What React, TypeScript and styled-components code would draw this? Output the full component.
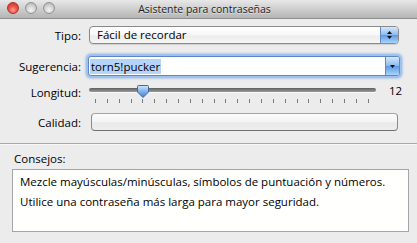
import React from "react";
import styled, { createGlobalStyle } from "styled-components";

const GlobalStyle = createGlobalStyle`
  html, body {
    margin: 0;
    padding: 0;
    background: #ececec;
  }
  body {
    font-family: "Open Sans", "DejaVu Sans", sans-serif;
    font-size: 11.5px;
    color: #000;
  }
`;

const Window = styled.div`
  width: 417px;
  height: 243px;
  display: flex;
  flex-direction: column;
  background: #ececec;
  overflow: hidden;
`;

const TitleBar = styled.div`
  flex: none;
  height: 18px;
  position: relative;
  display: flex;
  align-items: center;
  justify-content: center;
  padding-right: 8px;
  background: linear-gradient(#e8e8e8, #b4b4b4);
  border-bottom: 1px solid #8f8f8f;
`;

const Lights = styled.div`
  position: absolute;
  left: 7px;
  top: 2px;
  display: flex;
  gap: 6px;
`;

const Light = styled.span<{ $red?: boolean }>`
  width: 12px;
  height: 12px;
  box-sizing: border-box;
  border-radius: 50%;
  border: 1px solid ${(p) => (p.$red ? "#a7342c" : "#929292")};
  background: ${(p) =>
    p.$red
      ? "radial-gradient(circle at 50% 70%, #ff9d93 0%, #ee5247 45%, #c23128 100%)"
      : "radial-gradient(circle at 50% 70%, #f4f4f4 0%, #d2d2d2 50%, #a9a9a9 100%)"};
`;

const Title = styled.span`
  font-size: 10.5px;
  color: #1e1e1e;
  text-shadow: 0 1px 0 rgba(255, 255, 255, 0.5);
`;

const Form = styled.div`
  display: flex;
  flex-direction: column;
  padding: 0 17px 0 0;
`;

const Row = styled.div<{ $h: number; $mt: number }>`
  display: grid;
  grid-template-columns: 81px 1fr;
  column-gap: 8px;
  align-items: center;
  height: ${(p) => p.$h}px;
  margin-top: ${(p) => p.$mt}px;
`;

const Label = styled.span`
  text-align: right;
  white-space: nowrap;
`;

const Popup = styled.div`
  height: 18px;
  box-sizing: border-box;
  display: flex;
  margin-right: 1px;
  border: 1px solid #8a8a8a;
  border-radius: 4px;
  overflow: hidden;
  background: linear-gradient(#ffffff 0%, #f8f8f8 50%, #ececec 55%, #f6f6f6 100%);
  box-shadow: 0 1px 1px rgba(0, 0, 0, 0.12);
`;

const PopupText = styled.span`
  flex: 1;
  padding-left: 7px;
  line-height: 16px;
`;

const ArrowCell = styled.div<{ $w: number }>`
  width: ${(p) => p.$w}px;
  flex: none;
  display: flex;
  flex-direction: column;
  align-items: center;
  justify-content: center;
  gap: 2px;
  border-left: 1px solid #6489c0;
  background: linear-gradient(#d6e8fb 0%, #8dbbef 48%, #5e9ae2 52%, #a9d4fc 100%);
`;

const Combo = styled.div`
  height: 20px;
  box-sizing: border-box;
  display: flex;
  margin-left: -1px;
  border: 1px solid #5d87c4;
  border-radius: 3px;
  overflow: hidden;
  background: #fff;
  box-shadow: 0 0 0 2px #9ec2eb, 0 0 2px 3px rgba(120, 165, 225, 0.45);
`;

const ComboField = styled.div`
  flex: 1;
  display: flex;
  align-items: center;
  padding-left: 1px;
`;

const Selected = styled.span`
  background: #b5d4fb;
  line-height: 15px;
  padding: 0 1px;
`;

const SliderLine = styled.div`
  display: flex;
  align-items: flex-start;
  height: 100%;
`;

const SliderBox = styled.div`
  position: relative;
  width: 287px;
  display: flex;
  flex-direction: column;
`;

const Track = styled.div`
  height: 4px;
  margin-top: 3px;
  border-radius: 2px;
  background: linear-gradient(#5f5f5f, #9a9a9a);
  box-shadow: 0 1px 0 rgba(255, 255, 255, 0.7);
`;

const Ticks = styled.div`
  display: flex;
  justify-content: space-between;
  padding: 0 7px 0 6px;
  margin-top: 7px;
  height: 4px;
`;

const Tick = styled.span`
  width: 1px;
  background: #7a7a7a;
`;

const Knob = styled.svg`
  position: absolute;
  top: 0;
  margin-left: -6px;
`;

const Value = styled.span`
  margin-left: 13px;
  line-height: 11px;
`;

const Meter = styled.div`
  height: 18px;
  box-sizing: border-box;
  margin-left: 2px;
  margin-right: 2px;
  border: 1px solid #8b8b8b;
  border-top-color: #a5a5a5;
  border-bottom-color: #6f6f6f;
  border-radius: 4px;
  background: linear-gradient(#fbfbfb 0%, #f3f3f3 50%, #e9e9e9 55%, #eeeeee 100%);
`;

const Separator = styled.div`
  height: 1px;
  margin-top: 12px;
  background: #a9a9a9;
  box-shadow: 0 1px 0 #f7f7f7;
`;

const Tips = styled.div`
  display: flex;
  flex-direction: column;
  padding: 0 8px 0 12px;
`;

const TipsLabel = styled.span`
  margin-top: 8px;
  padding-left: 2px;
  line-height: 14px;
`;

const TipsBox = styled.div`
  margin-top: 3px;
  height: 63px;
  box-sizing: border-box;
  padding: 5px 7px;
  border: 1px solid #a6a6a6;
  background: #fffffd;
`;

const Tip = styled.p`
  margin: 0;
  line-height: 14px;
  white-space: nowrap;
  & + & {
    margin-top: 6px;
  }
`;

const Up = () => (
  <svg width="5" height="3" viewBox="0 0 5 3">
    <path d="M2.5 0L5 3H0z" fill="#111" />
  </svg>
);

const Down = () => (
  <svg width="5" height="3" viewBox="0 0 5 3">
    <path d="M0 0h5L2.5 3z" fill="#111" />
  </svg>
);

const TICKS = 24;
const length = 12;
const minLength = 8;

export default function App() {
  const step = (287 - 13) / (TICKS - 1);
  const knobLeft = 6 + (length - minLength) * step;

  return (
    <>
      <GlobalStyle />
      <Window>
        <TitleBar>
          <Lights>
            <Light $red />
            <Light />
            <Light />
          </Lights>
          <Title>Asistente para contraseñas</Title>
        </TitleBar>

        <Form>
          <Row $h={18} $mt={7}>
            <Label>Tipo:</Label>
            <Popup>
              <PopupText>Fácil de recordar</PopupText>
              <ArrowCell $w={17}>
                <Up />
                <Down />
              </ArrowCell>
            </Popup>
          </Row>

          <Row $h={20} $mt={12}>
            <Label>Sugerencia:</Label>
            <Combo>
              <ComboField>
                <Selected>torn5!pucker</Selected>
              </ComboField>
              <ArrowCell $w={13}>
                <Down />
              </ArrowCell>
            </Combo>
          </Row>

          <Row $h={19} $mt={9}>
            <Label style={{ alignSelf: "start", marginTop: 0 }}>Longitud:</Label>
            <SliderLine>
              <SliderBox>
                <Track />
                <Ticks>
                  {Array.from({ length: TICKS }, (_, i) => (
                    <Tick key={i} />
                  ))}
                </Ticks>
                <Knob width="12" height="13" viewBox="0 0 12 13" style={{ left: knobLeft }}>
                  <defs>
                    <linearGradient id="knob" x1="0" y1="0" x2="0" y2="1">
                      <stop offset="0" stopColor="#d3e6fb" />
                      <stop offset="0.5" stopColor="#7fb1ec" />
                      <stop offset="1" stopColor="#3f7fd3" />
                    </linearGradient>
                  </defs>
                  <path
                    d="M1.5 0.5h9a1 1 0 0 1 1 1v5.5L6 12.5 0.5 7V1.5a1 1 0 0 1 1-1z"
                    fill="url(#knob)"
                    stroke="#44679b"
                  />
                </Knob>
              </SliderBox>
              <Value>{length}</Value>
            </SliderLine>
          </Row>

          <Row $h={18} $mt={9}>
            <Label>Calidad:</Label>
            <Meter />
          </Row>
        </Form>

        <Separator />

        <Tips>
          <TipsLabel>Consejos:</TipsLabel>
          <TipsBox>
            <Tip>Mezcle mayúsculas/minúsculas, símbolos de puntuación y números.</Tip>
            <Tip>Utilice una contraseña más larga para mayor seguridad.</Tip>
          </TipsBox>
        </Tips>
      </Window>
    </>
  );
}
